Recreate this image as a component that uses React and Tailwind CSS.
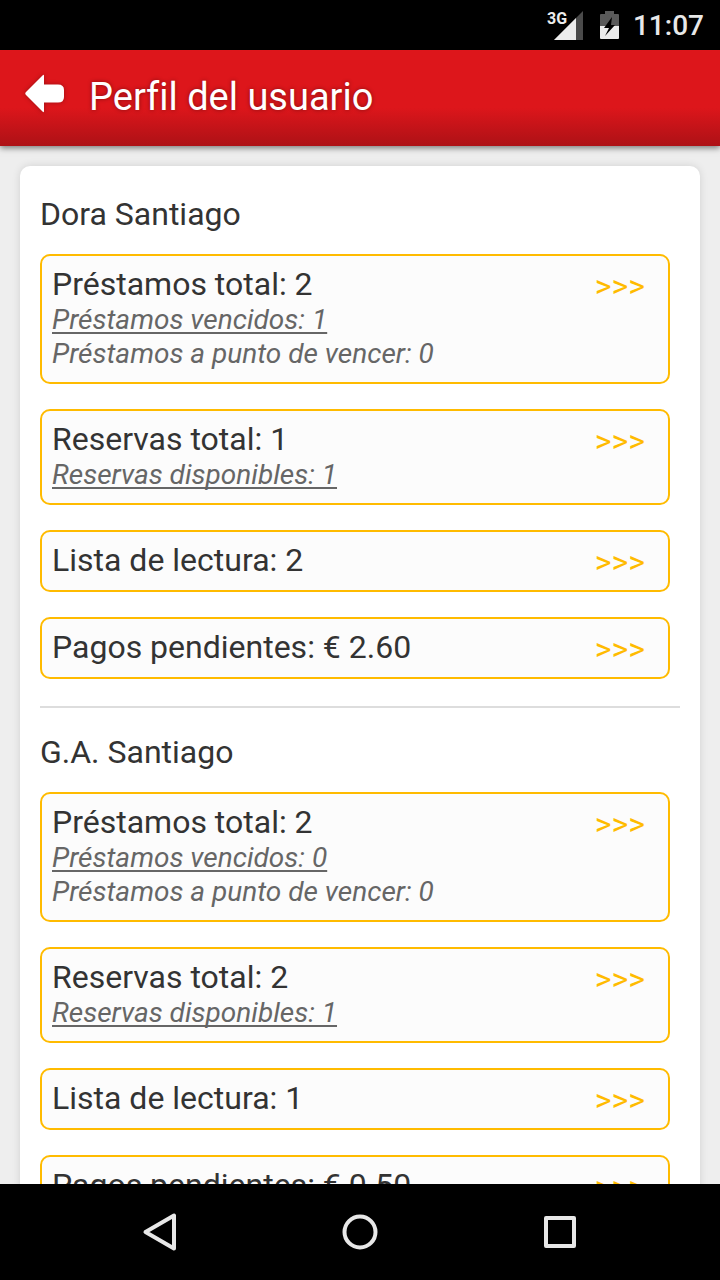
const users = [
    {
        name: "Dora Santiago",
        items: [
            {
                label: "Préstamos total: 2",
                details: [
                    { text: "Préstamos vencidos: 1", underline: true },
                    { text: "Préstamos a punto de vencer: 0" },
                ],
            },
            {
                label: "Reservas total: 1",
                details: [{ text: "Reservas disponibles: 1", underline: true }],
            },
            { label: "Lista de lectura: 2" },
            { label: "Pagos pendientes: € 2.60" },
        ],
    },
    {
        name: "G.A. Santiago",
        items: [
            {
                label: "Préstamos total: 2",
                details: [
                    { text: "Préstamos vencidos: 0", underline: true },
                    { text: "Préstamos a punto de vencer: 0" },
                ],
            },
            {
                label: "Reservas total: 2",
                details: [{ text: "Reservas disponibles: 1", underline: true }],
            },
            { label: "Lista de lectura: 1" },
            { label: "Pagos pendientes: € 0.50" },
        ],
    },
];

function StatusBar() {
    return (
        <div className="flex h-[50px] shrink-0 items-center justify-end bg-black pr-4 text-[#e8e8e8]">
            <svg className="mr-4 h-8 w-9" viewBox="0 0 36 32" aria-hidden="true">
                <path d="M36 2V31H7z" fill="#4a4a4a" />
                <path d="M29 9V31H7z" fill="#ececec" />
                <text x="0" y="15" fontSize="16" fontWeight="700" fontFamily="Roboto, sans-serif" fill="#ececec">
                    3G
                </text>
            </svg>
            <svg className="mr-3.5 h-8 w-5" viewBox="0 0 20 32" aria-hidden="true">
                <path d="M1 17V6Q1 5 2 5H6V2H15V5H19Q20 5 20 6V17z" fill="#5a5a5a" />
                <path d="M1 17H20V29Q20 30 19 30H2Q1 30 1 29z" fill="#ececec" />
                <path d="M13 8L5 19H10L6 27L16 16H12z" fill="#000" />
            </svg>
            <span className="pt-0.5 text-[28px] leading-[34px] font-medium">11:07</span>
        </div>
    );
}

function Header() {
    return (
        <header className="relative z-10 flex h-24 shrink-0 items-center bg-linear-to-b from-[#dd161b] from-60% to-[#ad1116] px-6 pb-0.5 text-white shadow-[0_2px_6px_rgba(0,0,0,0.5)]">
            <button type="button" aria-label="Volver" className="mr-6 pb-1.5 drop-shadow-[0_0_2px_rgba(0,0,0,0.3)]">
                <svg className="h-10 w-[41px]" viewBox="0 0 41 40" fill="currentColor" aria-hidden="true">
                    <path d="M18.500 1.500Q20 0 20 2V10.500H34Q40 10.500 40 16V23Q40 28.500 34 28.500H20V37Q20 39 18.500 37.500L2 21Q0.500 19.500 2 18z" />
                </svg>
            </button>
            <h1 className="text-[38px] leading-[44px] [font-variant-ligatures:none] [text-shadow:0_0_4px_rgba(0,0,0,0.4)]">
                Perfil del usuario
            </h1>
        </header>
    );
}

function ItemBox({ item }) {
    return (
        <a
            href="#"
            className="flex items-start justify-between rounded-[10px] border-2 border-[#ffbb00] bg-[#fcfcfc] py-[9px] pr-[23px] pl-2.5"
        >
            <div className="pb-0.5">
                <p className="text-[32px] leading-[38px]">{item.label}</p>
                {item.details?.map((detail) => (
                    <p
                        key={detail.text}
                        className={`text-[28px] leading-[34px] text-[#666] italic ${
                            detail.underline
                                ? "underline decoration-2 underline-offset-3 [text-decoration-skip-ink:none]"
                                : ""
                        }`}
                    >
                        {detail.text}
                    </p>
                ))}
            </div>
            <span className="pt-0.5 text-[32px] leading-[38px] text-[#ffbb00]">&gt;&gt;&gt;</span>
        </a>
    );
}

function NavBar() {
    return (
        <nav className="flex h-24 shrink-0 items-center justify-center gap-40 bg-black text-[#e8e8e8]">
            <button type="button" aria-label="Atrás">
                <svg className="h-10 w-10" viewBox="0 0 40 40" fill="none" stroke="currentColor" strokeWidth="4" strokeLinejoin="round" aria-hidden="true">
                    <path d="M34 3.500V36.500L5.500 20z" />
                </svg>
            </button>
            <button type="button" aria-label="Inicio">
                <svg className="h-10 w-10" viewBox="0 0 40 40" fill="none" stroke="currentColor" strokeWidth="4" aria-hidden="true">
                    <circle cx="20" cy="20" r="15.500" />
                </svg>
            </button>
            <button type="button" aria-label="Recientes">
                <svg className="h-10 w-10" viewBox="0 0 40 40" fill="none" stroke="currentColor" strokeWidth="4" strokeLinejoin="round" aria-hidden="true">
                    <rect x="6" y="6" width="28" height="28" />
                </svg>
            </button>
        </nav>
    );
}

export default function App() {
    return (
        <div className="flex h-screen flex-col bg-[#eee] font-[Roboto,sans-serif] text-[#333]">
            <StatusBar />
            <Header />

            <main className="min-h-0 flex-1 overflow-hidden p-5">
                <div className="divide-y-2 divide-[#ddd] rounded-[10px] bg-white px-5 pt-1 pb-5 shadow-[0_0_8px_rgba(0,0,0,0.12)]">
                    {users.map((user) => (
                        <section key={user.name} className="pt-6 pb-[27px]">
                            <h2 className="mb-5 text-[32px] leading-10">{user.name}</h2>
                            <div className="flex flex-col gap-[25px] pr-2.5">
                                {user.items.map((item) => (
                                    <ItemBox key={item.label} item={item} />
                                ))}
                            </div>
                        </section>
                    ))}
                </div>
            </main>

            <NavBar />
        </div>
    );
}
